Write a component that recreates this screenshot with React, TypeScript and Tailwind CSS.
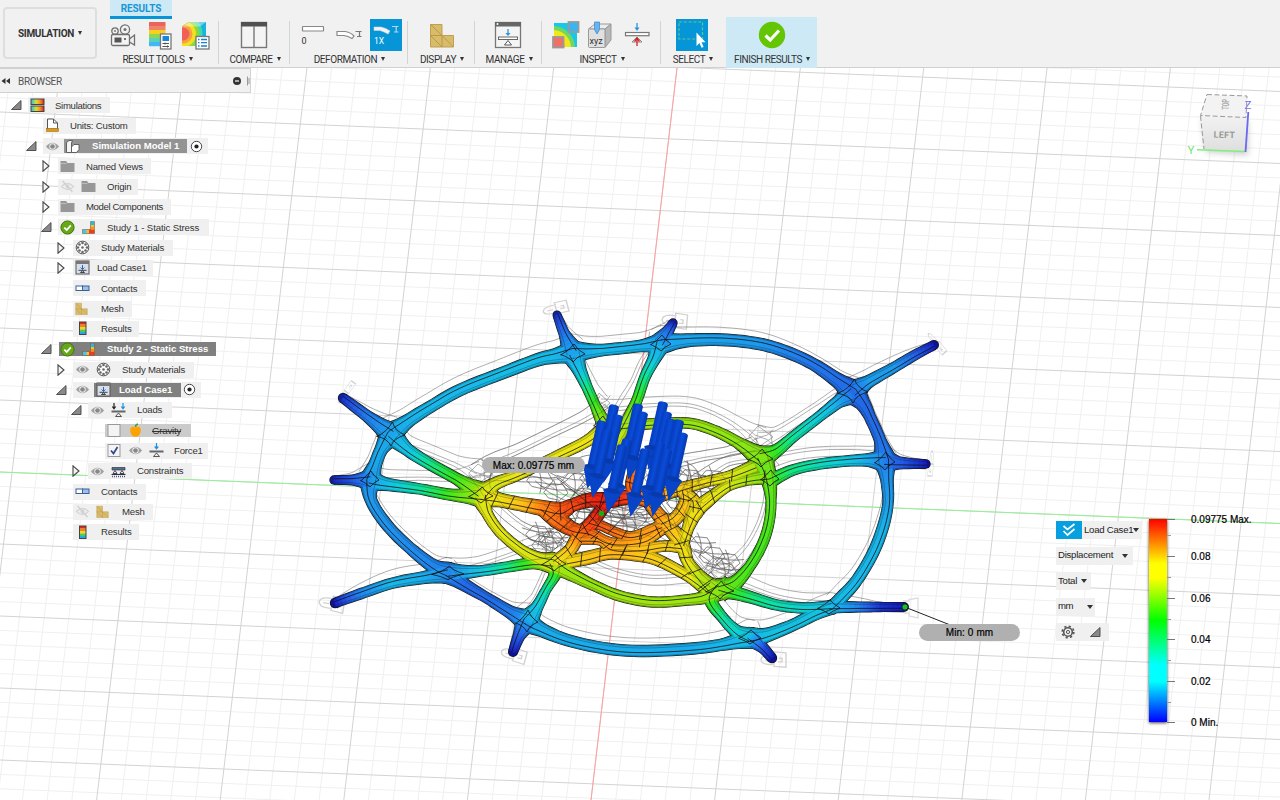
import React from 'react';

type P = [number, number, number, number];

const STOPS: [number, number, number, number][] = [
  [0, 18, 24, 190], [0.1, 36, 92, 230], [0.17, 32, 140, 238], [0.24, 24, 184, 234], [0.3, 16, 208, 214], [0.38, 16, 228, 150],
  [0.48, 50, 232, 32], [0.58, 150, 230, 18], [0.68, 236, 230, 20], [0.78, 255, 190, 24], [0.88, 255, 124, 20], [1, 244, 34, 18],
];

function heat(v: number, k = 1) {
  const t = Math.max(0, Math.min(1, v));
  let i = 0;
  while (i < STOPS.length - 2 && STOPS[i + 1][0] < t) i++;
  const a = STOPS[i];
  const b = STOPS[i + 1];
  const f = (t - a[0]) / (b[0] - a[0]);
  const c = [1, 2, 3].map((n) => Math.round((a[n] + (b[n] - a[n]) * f) * k));
  return `rgb(${c[0]},${c[1]},${c[2]})`;
}

const TUBES: P[][] = [
  // outer ring
  [[573, 352, 9, 0.21], [555, 356, 7, 0.24], [537, 360, 6, 0.25], [500, 374, 5.7, 0.25], [460, 390, 5.7, 0.24], [430, 407, 5.7, 0.24], [408, 421, 6.5, 0.23], [391, 434, 9, 0.21]],
  [[391, 434, 9, 0.21], [381, 450, 6, 0.22], [375, 465, 6, 0.21], [370, 480, 8, 0.18]],
  [[370, 480, 8, 0.18], [371, 500, 5.5, 0.19], [387, 525, 5.5, 0.18], [410, 548, 5.5, 0.17], [433, 566, 6.5, 0.16], [448, 573, 8, 0.15]],
  [[448, 573, 8, 0.15], [465, 585, 6, 0.12], [487, 598, 5, 0.12], [510, 612, 6, 0.15], [527, 621, 9, 0.21]],
  [[527, 621, 9, 0.21], [540, 629, 6.5, 0.22], [567, 640, 5.5, 0.22], [603, 648, 5.5, 0.22], [640, 651, 5.5, 0.22], [687, 649, 5.5, 0.22], [720, 645, 5.5, 0.24], [750, 638, 8, 0.24]],
  [[750, 638, 8, 0.24], [767, 635, 6.5, 0.26], [793, 625, 5.5, 0.26], [815, 614, 6, 0.26], [832, 607, 7, 0.23]],
  [[832, 607, 6, 0.23], [842, 597, 6, 0.25], [857, 580, 5.5, 0.24], [873, 553, 5.5, 0.24], [883, 527, 5.5, 0.23], [888, 503, 5, 0.2], [887, 480, 6, 0.18], [885, 460, 9, 0.15]],
  [[885, 460, 9, 0.15], [880, 440, 5.5, 0.13], [870, 417, 5.5, 0.12], [863, 404, 7, 0.12], [853, 392, 10, 0.12]],
  [[853, 392, 10, 0.12], [837, 380, 7, 0.13], [813, 364, 5.7, 0.14], [787, 352, 5.7, 0.16], [760, 344, 5.7, 0.19], [727, 340, 5.7, 0.2], [693, 340, 6, 0.21], [662, 343, 8, 0.21]],
  [[662, 343, 8, 0.2], [640, 346, 5.5, 0.23], [603, 350, 5.5, 0.24], [573, 352, 9, 0.2]],
  // legs
  [[573, 352, 9, 0.21], [564, 333, 5, 0.13], [557, 315, 3.8, 0.03]],
  [[391, 434, 9, 0.21], [367, 416, 5.5, 0.14], [343, 398, 4.5, 0.03]],
  [[370, 480, 8, 0.18], [352, 480, 4.5, 0.09], [334, 480, 4, 0.02]],
  [[448, 573, 8, 0.16], [427, 577, 6, 0.22], [393, 583, 5, 0.24], [360, 594, 5, 0.15], [335, 603, 4.5, 0.0]],
  [[527, 621, 9, 0.2], [519, 636, 5.5, 0.1], [513, 652, 4.3, 0.0]],
  [[750, 636, 8, 0.24], [763, 648, 5, 0.08], [772, 658, 4.5, 0.0]],
  [[830, 607, 6, 0.25], [860, 607, 4.8, 0.14], [880, 607, 4.5, 0.04], [904, 607, 4.2, 0.0]],
  [[885, 461, 9, 0.15], [900, 463, 5.5, 0.1], [926, 464, 4, 0.0]],
  [[853, 392, 10, 0.12], [868, 382, 6, 0.2], [893, 368, 5, 0.19], [915, 355, 4.8, 0.1], [934, 345, 4.3, 0.0]],
  [[660, 343, 8, 0.2], [668, 331, 5, 0.12], [673, 323, 4, 0.02]],
  // spokes
  [[573, 354, 9, 0.21], [579, 369, 6.5, 0.26], [587, 387, 5, 0.4], [595, 405, 4.8, 0.5], [603, 422, 7, 0.6]],
  [[660, 343, 8, 0.21], [655, 357, 6, 0.26], [645, 377, 5, 0.39], [637, 400, 5, 0.5], [627, 422, 6, 0.6], [612, 450, 5, 0.68]],
  [[391, 434, 9, 0.21], [408, 450, 6, 0.27], [430, 464, 5.5, 0.4], [457, 479, 5.5, 0.5], [480, 493, 9, 0.62]],
  [[370, 480, 8, 0.18], [385, 484, 6, 0.25], [420, 489, 5, 0.38], [453, 495, 5.5, 0.52], [482, 496, 9, 0.62]],
  [[448, 573, 8, 0.16], [480, 571, 5, 0.28], [507, 567, 5, 0.4], [533, 563, 5.5, 0.54], [553, 563, 8, 0.6]],
  [[553, 563, 8, 0.6], [555, 574, 5, 0.48], [546, 590, 4.5, 0.36], [537, 607, 5.5, 0.27], [527, 621, 9, 0.21]],
  [[720, 587, 9, 0.55], [711, 600, 6, 0.5], [723, 618, 5, 0.36], [737, 632, 6, 0.3], [750, 638, 8, 0.24]],
  [[720, 587, 9, 0.53], [733, 592, 6.5, 0.48], [753, 598, 5.5, 0.4], [777, 605, 5, 0.35], [803, 608, 5, 0.3], [830, 607, 6, 0.24]],
  [[853, 392, 10, 0.12], [838, 402, 6, 0.22], [820, 416, 5, 0.29], [793, 437, 5, 0.38], [776, 451, 6, 0.48], [761, 457, 9, 0.56]],
  [[885, 461, 9, 0.15], [868, 460, 6, 0.22], [847, 461, 5, 0.28], [820, 464, 5, 0.34], [793, 470, 5, 0.4], [770, 481, 7, 0.52]],
  // inner ring
  [[603, 428, 6, 0.62], [623, 427, 5.5, 0.6], [647, 424, 5, 0.59], [687, 423, 5, 0.58], [713, 430, 5, 0.58], [737, 442, 5.5, 0.57], [761, 458, 9, 0.56]],
  [[761, 457, 9, 0.56], [768, 476, 8, 0.53], [771, 500, 4.8, 0.52], [769, 523, 4.8, 0.51], [762, 545, 5, 0.5], [750, 566, 5, 0.5], [735, 583, 7, 0.52], [720, 590, 9, 0.56]],
  [[720, 589, 9, 0.56], [705, 597, 6, 0.58], [687, 600, 5, 0.59], [653, 602, 5, 0.59], [620, 596, 5, 0.59], [593, 585, 5, 0.58], [567, 572, 6.5, 0.59], [553, 563, 8, 0.62]],
  [[553, 563, 8, 0.64], [538, 559, 6.5, 0.66], [520, 549, 5, 0.66], [500, 532, 5, 0.67], [487, 513, 5, 0.67], [482, 496, 9, 0.64]],
  [[482, 496, 9, 0.64], [495, 484, 6, 0.66], [520, 474, 5, 0.68], [553, 458, 5, 0.68], [587, 441, 5.5, 0.68], [606, 426, 7, 0.64]],
  // hub
  [[482, 496, 9, 0.66], [500, 500, 6.5, 0.7], [520, 504, 6.5, 0.77], [542, 508, 7.5, 0.88], [560, 511, 9, 0.93], [573, 505, 6, 0.95], [590, 500, 7, 0.99], [610, 500, 7.5, 1], [632, 497, 6.5, 0.95], [650, 502, 6, 0.86]],
  [[542, 508, 7, 0.87], [557, 519, 9, 0.9], [572, 529, 7, 0.92], [590, 533, 5, 0.9], [612, 543, 5, 0.84], [643, 541, 5, 0.8], [661, 529, 6, 0.82]],
  [[606, 502, 7, 1], [599, 513, 6, 1], [590, 525, 7, 0.96], [579, 535, 6.5, 0.88], [570, 550, 6, 0.76], [555, 563, 7, 0.66]],
  [[590, 522, 5, 0.95], [602, 526, 4.5, 0.92], [618, 533, 4.5, 0.88], [634, 536, 4.5, 0.83], [661, 526, 6, 0.83]],
  [[567, 562, 6, 0.7], [587, 558, 6.5, 0.76], [610, 553, 6, 0.79], [640, 555, 6.5, 0.76], [660, 561, 5.5, 0.73], [688, 576, 5, 0.68], [708, 590, 7, 0.6]],
  [[580, 540, 4, 0.86], [600, 541, 4, 0.84], [614, 549, 5.5, 0.8], [642, 549, 5.5, 0.77], [665, 546, 5, 0.74], [682, 547, 6, 0.71]],
  [[634, 470, 5, 0.88], [632, 488, 6, 0.92], [645, 498, 6, 0.87], [657, 513, 6.5, 0.84], [670, 528, 7.5, 0.78], [682, 544, 7, 0.71], [688, 562, 5.5, 0.68], [700, 578, 7, 0.62], [712, 590, 8, 0.58]],
  [[655, 498, 6, 0.84], [668, 493, 6, 0.8], [684, 488, 6, 0.74], [705, 482, 5, 0.7], [730, 476, 5, 0.66], [755, 466, 7, 0.6]],
  [[684, 490, 5.5, 0.76], [685, 503, 6, 0.76], [676, 518, 6.5, 0.77], [662, 526, 6, 0.8]],
  [[682, 545, 6, 0.7], [688, 528, 5.5, 0.7], [695, 512, 8, 0.7], [708, 500, 6.5, 0.68], [728, 486, 5, 0.65], [748, 480, 5, 0.6], [768, 477, 7, 0.54]],
  [[684, 493, 5, 0.74], [694, 500, 5.5, 0.72], [695, 512, 6, 0.7]],
];

function sample(pts: P[], n: number): P[] {
  const out: P[] = [];
  for (let i = 0; i < pts.length - 1; i++) {
    const p0 = pts[Math.max(0, i - 1)];
    const p1 = pts[i];
    const p2 = pts[i + 1];
    const p3 = pts[Math.min(pts.length - 1, i + 2)];
    for (let s = 0; s < n; s++) {
      const t = s / n;
      out.push([0, 1, 2, 3].map((k) =>
        k > 1
          ? p1[k] + (p2[k] - p1[k]) * t
          : 0.5 * (2 * p1[k] + (p2[k] - p0[k]) * t + (2 * p0[k] - 5 * p1[k] + 4 * p2[k] - p3[k]) * t * t + (3 * p1[k] - p0[k] - 3 * p2[k] + p3[k]) * t * t * t),
      ) as P);
    }
  }
  out.push([...pts[pts.length - 1]] as P);
  // widen towards junctions so that neighbouring tubes meet in a fillet
  const ends = [pts[0], pts[pts.length - 1]].filter((e) => e[2] >= 8);
  return out.map((p) => {
    const extra = ends.reduce((m, e) => m + 2.6 * Math.exp(-(((p[0] - e[0]) ** 2 + (p[1] - e[1]) ** 2) / 130)), 0);
    return [p[0], p[1], p[2] + extra, p[3]] as P;
  });
}

function side(s: P[], k: number, extra = 0): [number, number][] {
  return s.map((p, i) => {
    const a = s[Math.max(0, i - 1)];
    const b = s[Math.min(s.length - 1, i + 1)];
    const l = Math.hypot(b[0] - a[0], b[1] - a[1]) || 1;
    const w = p[2] * k + extra;
    return [p[0] - ((b[1] - a[1]) / l) * w, p[1] + ((b[0] - a[0]) / l) * w];
  });
}

const line = (q: [number, number][]) => 'M' + q.map((p) => p[0].toFixed(1) + ' ' + p[1].toFixed(1)).join('L');

const SAMPLED = TUBES.map((t) => sample(t, 6));
const REST = TUBES.map((t) => sample(t.map((p) => [p[0] - 3 * p[3], p[1] - 39 * (p[3] - 0.03), p[2], p[3]] as P), 6));

function Strip({ s, k, shade }: { s: P[]; k: number; shade: number }) {
  const a = side(s, k);
  const b = side(s, -k);
  return (
    <>
      {s.slice(0, -1).map((p, i) => {
        const c = heat(p[3], shade);
        return <path key={i} d={line([a[i], a[i + 1], b[i + 1], b[i]]) + 'Z'} fill={c} stroke={c} strokeWidth="0.7" />;
      })}
    </>
  );
}

function Rungs({ s, step }: { s: P[]; step: number }) {
  const a = side(s, 1);
  const b = side(s, -1);
  const d: string[] = [];
  for (let i = 4; i < s.length - 2; i += step) d.push(line([a[i], b[i + 1]]));
  return <path d={d.join('')} />;
}

const NODES: [number, number, number, number][] = [
  [573, 353, 12, 9], [391, 434, 14, 12], [370, 479, 9, 8], [448, 573, 16, 7], [527, 621, 11, 11], [750, 637, 11, 7],
  [853, 391, 15, 12], [885, 461, 10, 9], [661, 343, 10, 8], [481, 495, 12, 8], [554, 563, 12, 8], [720, 590, 14, 9],
  [761, 458, 12, 9], [770, 478, 9, 8], [829, 607, 11, 7], [602, 424, 8, 8],
];

const INNER_NODES = NODES.filter(([x, y]) => y > 423 && y < 600 && x > 470 && x < 780);

// polygonal cells of the unloaded hub, showing through its openings
const WEB: [number, number, number][] = [
  [540, 480, 13], [556, 492, 12], [574, 482, 13], [592, 478, 12], [538, 534, 12], [552, 540, 12], [566, 520, 10], [610, 518, 12],
  [622, 512, 11], [634, 520, 12], [646, 512, 10], [626, 526, 11], [598, 514, 9], [700, 494, 13], [690, 478, 12], [712, 480, 14],
  [676, 503, 9], [700, 545, 12], [712, 556, 13], [728, 562, 12], [724, 572, 13], [545, 545, 13], [640, 470, 12], [584, 496, 11], [584, 514, 8],
];

const cell = (x: number, y: number, r: number) =>
  `M${x - r} ${y}L${x - r * 0.4} ${y - r * 0.7}L${x + r * 0.6} ${y - r * 0.6}L${x + r} ${y + r * 0.1}L${x + r * 0.3} ${y + r * 0.7}L${x - r * 0.6} ${y + r * 0.5}ZM${x - r * 1.3} ${y - r * 0.5}Q${x} ${y} ${x + r * 1.3} ${y - r * 0.2}M${x - r * 0.2} ${y - r}Q${x + r * 0.3} ${y} ${x} ${y + r}`;

function Model() {
  return (
    <g strokeLinejoin="round" strokeLinecap="round">
      <g fill="none" stroke="#555" strokeWidth="0.6" opacity="0.8">
        {REST.map((s, i) => (
          <g key={i}>
            <path d={line(side(s, 1))} />
            <path d={line(side(s, -1))} />
            {s[3][3] + s[s.length - 3][3] > 0.5 && <path d={line(side(s, 0.35))} />}
          </g>
        ))}
        {INNER_NODES.map(([x, y, a, b], i) => (
          <path key={i} d={`M${x - a} ${y - 22}L${x - 3} ${y - 23 - b}L${x + a} ${y - 21}L${x - 1} ${y - 21 + b}ZM${x - a} ${y - 28}Q${x} ${y - 14} ${x + a} ${y - 28}M${x - a} ${y - 14}Q${x} ${y - 28} ${x + a} ${y - 13}`} />
        ))}
        {WEB.map(([x, y, r], i) => <path key={i} d={cell(x, y, r)} />)}
      </g>
      <g fill="#151515">
        {SAMPLED.map((s, i) => (
          <g key={i}>
            <path d={line([...side(s, 1, 0.7), ...side(s, -1, -0.7).reverse()]) + 'Z'} />
            <circle cx={s[s.length - 1][0]} cy={s[s.length - 1][1]} r={TUBES[i][TUBES[i].length - 1][2] + 0.7} />
          </g>
        ))}
      </g>
      {SAMPLED.map((s, i) => (
        <g key={i}>
          <Strip s={s} k={0.95} shade={0.76} />
          <circle cx={s[s.length - 1][0]} cy={s[s.length - 1][1]} r={TUBES[i][TUBES[i].length - 1][2]} fill={heat(s[s.length - 1][3], 0.76)} />
        </g>
      ))}
      {SAMPLED.map((s, i) => (
        <g key={i}>
          <Strip s={s} k={0.72} shade={1} />
        </g>
      ))}
      <g fill="none" stroke="#101010" strokeWidth="0.8">
        {SAMPLED.map((s, i) => (
          <g key={i}>
            <path d={line(side(s, 0.3))} />
            <path d={line(side(s, -0.55))} opacity="0.35" />
            {s[0][3] > 0.65 && <Rungs s={s} step={5} />}
          </g>
        ))}
        {NODES.map(([x, y, a, b], i) => (
          <path key={i} d={`M${x - a} ${y + b * 0.2}Q${x - 4} ${y - 2} ${x + a * 0.1} ${y - b}Q${x + 4} ${y - 3} ${x + a} ${y + 1}Q${x + 3} ${y + 4} ${x} ${y + b}Q${x - 4} ${y + 4} ${x - a} ${y + b * 0.2}Z`} />
        ))}
      </g>
      <g fill="none" stroke="#222" strokeWidth="0.5" opacity="0.45">
        {REST.filter((s) => s[0][3] > 0.62).map((s, i) => (
          <g key={i}>
            <path d={line(side(s, 1))} />
            <path d={line(side(s, -1))} />
          </g>
        ))}
        {WEB.map(([x, y, r], i) => <path key={i} d={cell(x, y, r)} />)}
      </g>
    </g>
  );
}

const ARROWS: [number, number][] = [
  [638, 406], [614, 407], [643, 414], [618, 417], [663, 404], [667, 414], [671, 421], [679, 422], [602, 423],
  [607, 432], [683, 435], [627, 441], [622, 447], [660, 444], [667, 451], [645, 451],
];

function Forces() {
  return (
    <g>
      <defs>
        <linearGradient id="shaft" x1="0" x2="1" y1="0" y2="0">
          <stop offset="0" stopColor="#063cb8" />
          <stop offset="0.5" stopColor="#0a4cdb" />
          <stop offset="1" stopColor="#0538ac" />
        </linearGradient>
      </defs>
      {ARROWS.map(([x, y], i) => (
        <g key={i} transform={`translate(${x} ${y}) rotate(12.5)`}>
          <path d="M-5 0A5 2.4 0 0 1 5 0V46H-5Z" fill="url(#shaft)" />
          <path d="M-9 45Q0 40 9 45L0 67Z" fill="#083aae" />
          <path d="M-9 45Q0 50 9 45L0 67Z" fill="#0844c8" />
        </g>
      ))}
    </g>
  );
}

const RANGE = Array.from({ length: 120 }, (_, i) => i - 60);
const ANCHORS: [number, number, number, number][] = [
  [555, 309, -15, 0.7], [346, 393, -55, 0.35], [331, 604, 10, 0.9], [513, 655, 15, 0.8], [773, 660, 0, 0.9], [674, 321, 5, 0.9], [936, 343, 50, 0.4], [931, 463, 95, 0.3],
];

function Scene() {
  return (
    <svg className="absolute inset-0 h-full w-full" viewBox="0 68 1280 732" preserveAspectRatio="none">
      <rect y="68" width="1280" height="732" fill="#fff" />
      {[false, true].map((major) => (
        <g key={String(major)} stroke={major ? '#d3d3d3' : '#f0f0f0'} strokeWidth="1">
          {RANGE.filter((n) => (n % 5 === 0) === major).map((n) => (
            <g key={n}>
              <line x1={677 + n * 24.67} y1="68" x2={591 + n * 24.72} y2="800" />
              <line x1="0" y1={472 + n * 14.4} x2="1280" y2={523.5 + n * 14.4} />
            </g>
          ))}
        </g>
      ))}
      <line x1="677" y1="68" x2="591" y2="800" stroke="#ffa0a0" />
      <line x1="0" y1="472" x2="1280" y2="523.5" stroke="#94f294" />
      <g fill="none" stroke="#d2d2d2" strokeWidth="1.4">
        {ANCHORS.map(([x, y, r, k], i) => (
          <g key={i} transform={`translate(${x} ${y}) rotate(${r}) scale(1 ${k})`}>
            <path d="M2 -6H-5Q-12 -5 -12 0Q-11 5 -4 5H0M1 -9L13 -8V8L1 7ZM-8 0H-2M6 -2H9V2H5" />
          </g>
        ))}
      </g>
      <Model />
      <line x1="601" y1="513" x2="557" y2="478" stroke="#222" strokeWidth="0.7" />
      <Forces />
      <circle cx="601.5" cy="513.5" r="2.7" fill="#10b010" />
      <path d="M903 601H909V599.500L918 598V618L909 616V613H904" fill="none" stroke="#ddd" strokeWidth="1.3" />
      <path d="M906 607.500L949 624.500" stroke="#222" strokeWidth="1" />
      <circle cx="905" cy="607" r="3.200" fill="#18c018" stroke="#114" strokeWidth="1" />
      <Cube />
    </svg>
  );
}

function Cube() {
  return (
    <g>
      <defs>
        <filter id="soft" x="-30%" y="-30%" width="160%" height="160%"><feGaussianBlur stdDeviation="3" /></filter>
        <linearGradient id="face" x1="0" y1="0" x2="0" y2="1"><stop offset="0" stopColor="#f2f2f2" /><stop offset="1" stopColor="#dedede" /></linearGradient>
      </defs>
      <path d="M1202 119L1248 122V155L1206 152Z" fill="#999" opacity="0.5" filter="url(#soft)" />
      <path d="M1207 95L1247 96L1246 118L1200 116Z" fill="#f3f3f3" />
      <path d="M1200 116L1248 118L1245 152L1204 149Z" fill="url(#face)" />
      <path d="M1207 94.500L1247 96L1246 117.500L1200.500 115.500ZM1200.500 116L1204 149" fill="none" stroke="#999" strokeWidth="1" strokeDasharray="5 2.500" />
      <path d="M1197 149.800L1245 151.500" stroke="#7df07d" strokeWidth="1.600" />
      <path d="M1245.500 152L1248.300 112" stroke="#6a6af0" strokeWidth="1.800" />
      <g fontFamily="Roboto, sans-serif">
        <text x="1213.500" y="137.500" fontSize="9" fontWeight="bold" fill="#999" letterSpacing="0.300" transform="rotate(2 1213 138)">LEFT</text>
        <text x="0" y="0" textAnchor="middle" fontSize="10" fontWeight="bold" fill="#aaa" transform="translate(1229 104.500) rotate(-88) scale(0.550 1)">TOP</text>
        <text x="1187.500" y="154" fontSize="11.500" fill="#6be86b">Y</text>
        <text x="1244.500" y="109" fontSize="11.500" fill="#7272f5">Z</text>
      </g>
    </g>
  );
}

/* ---------- toolbar ---------- */

const Caret = () => <span className="ml-[4px] inline-block h-0 w-0 shrink-0 border-x-[3px] border-t-[4px] border-x-transparent border-t-[#333]" />;
const BigCaret = () => <span className="ml-[4px] inline-block h-0 w-0 shrink-0 border-x-[2.500px] border-t-[4px] border-x-transparent border-t-[#333]" />;

function Group({ w, icons, label, line: rule = true }: { w: string; icons: React.ReactNode; label: string; line?: boolean }) {
  return (
    <div className={`relative flex flex-col items-center pt-[17px] ${w}`}>
      <div className="flex h-[36px] items-center justify-center gap-[4px]">{icons}</div>
      <div className="-mt-px flex h-[14px] items-center whitespace-nowrap pl-px font-['Roboto',sans-serif] text-[10px] tracking-[-0.420px] text-[#333]">
        {label}
        <BigCaret />
      </div>
      {rule && <span className="absolute right-0 top-[21px] h-[43px] w-px bg-[#d4d4d4]" />}
    </div>
  );
}

const Svg = ({ w = 32, h = 32, children }: { w?: number; h?: number; children: React.ReactNode }) => (
  <svg width={w} height={h} viewBox={`0 0 ${w} ${h}`} fill="none" className="shrink-0">{children}</svg>
);

const Camera = () => (
  <Svg w={28} h={28}>
    <g stroke="#707070" strokeWidth="1.300">
      <circle cx="5" cy="9" r="3.200" /><circle cx="15" cy="7.500" r="4.600" />
      <rect x="1.500" y="12.500" width="18" height="11" rx="1.500" fill="#f4f4f4" />
      <path d="M19.500 17L24.500 13V23L19.500 20" />
    </g>
    <circle cx="15" cy="7.500" r="1.500" fill="#707070" /><circle cx="5" cy="9" r="0.900" fill="#707070" />
    <rect x="4.500" y="15.500" width="7" height="5" fill="#555" /><circle cx="15" cy="17" r="1.100" fill="#555" />
  </Svg>
);

const Legend = () => (
  <Svg w={30} h={30}>
    {['#e8645c', '#ee8468', '#f6d020', '#8ed850', '#5cd0b8', '#40b8f6'].map((c, i) => <rect key={c} x="3" y={1 + i * 4} width="16.500" height="4.200" fill={c} />)}
    <rect x="14.500" y="13" width="10.500" height="15" fill="#fff" stroke="#777" strokeWidth="1.300" />
    <rect x="16.500" y="15" width="6.500" height="5" fill="#1486dc" />
    <path d="M16.500 22.500H23M16.500 25.500H23M19 21.500V23.500M21.500 24.500V26.500" stroke="#555" />
  </Svg>
);

const Contour = () => (
  <Svg w={30} h={30}>
    <defs><clipPath id="cc"><path d="M2 5.500L9 1H26V25H2Z" /></clipPath></defs>
    <g clipPath="url(#cc)">
      <rect width="30" height="30" fill="#19b4dc" />
      <circle cx="3" cy="13" r="19.500" fill="#3fd8b0" /><circle cx="3" cy="13" r="16.500" fill="#88da3c" />
      <circle cx="3" cy="13" r="13" fill="#f4e020" /><circle cx="3" cy="13" r="9.500" fill="#f8a040" /><circle cx="3" cy="13" r="6.500" fill="#ee6058" />
      <path d="M2 5.500L9 1H26L20 5.500Z" fill="#fff" opacity="0.400" />
    </g>
    <rect x="16" y="15.500" width="13" height="12.500" fill="#fff" stroke="#777" strokeWidth="1.300" />
    <path d="M18 18.500H19.500M21 18.500H27M18 21.700H19.500M21 21.700H27M18 25H19.500M21 25H27" stroke="#1880d0" strokeWidth="1.300" />
  </Svg>
);

const Compare = () => (
  <Svg w={28} h={28}>
    <rect x="1.500" y="1.500" width="25" height="25" fill="#f4f4f4" stroke="#777" strokeWidth="1.400" />
    <rect x="1" y="1" width="26" height="4.500" fill="#505050" /><path d="M14 5V26" stroke="#777" strokeWidth="1.400" />
  </Svg>
);

const Def0 = () => (
  <Svg w={32} h={30}>
    <rect x="5.500" y="6.500" width="21" height="4.500" rx="0.500" fill="#fff" stroke="#888" strokeWidth="1.200" />
    <text x="4.500" y="23.500" fontSize="9" fontFamily="Roboto, sans-serif" fill="#333">0</text>
  </Svg>
);

const DefA = () => (
  <Svg w={32} h={30}>
    <path d="M4 11.500H12Q17 12 21 16L19 18.500Q15 16 11 15.500H4Z" fill="#fff" stroke="#888" strokeWidth="1.200" />
    <path d="M22.500 11.500H28.500M24 16.500H28.500M26.500 11.500V16.500" stroke="#777" strokeWidth="1.200" />
  </Svg>
);

const Def1 = () => (
  <div className="h-[32px] w-[32px] bg-[#0696d7]">
    <Svg>
      <path d="M4 8H11Q16 9 20 12L18 15Q14 12.500 10 11.500H4Z" fill="#f2f2f2" stroke="#d8d8d8" strokeWidth="0.500" />
      <path d="M22 7.500H28.500M24 13H28.500M26.200 7.500V13" stroke="#a8daf2" strokeWidth="1.200" />
      <text x="4" y="24.500" fontSize="8.500" fontFamily="Roboto, sans-serif" fill="#fff">1X</text>
    </Svg>
  </div>
);

const Mesh = ({ s = 26 }: { s?: number }) => (
  <svg width={s} height={s} viewBox="0 0 26 26" className="shrink-0">
    <path d="M1.500 2.500H13V13.500H24.500V25H1.500Z" fill="#d9bc6a" stroke="#bf9f50" />
    <path d="M1.500 13.500H13V25M1.500 2.500L13 13.500L24.500 25M1.500 13.500L13 25" fill="none" stroke="#b8984a" strokeWidth="1" />
  </svg>
);

const Manage = () => (
  <Svg w={28} h={28}>
    <rect x="1.500" y="1.500" width="25" height="25" fill="#f4f4f4" stroke="#777" strokeWidth="1.300" />
    <rect x="1" y="1" width="26" height="4.500" fill="#666" /><circle cx="3.500" cy="3" r="1" fill="#fff" />
    <path d="M14 8V13" stroke="#2795dd" strokeWidth="1.300" /><path d="M11.500 12H16.500L14 15Z" fill="#2795dd" />
    <rect x="4.500" y="16" width="19" height="2.500" fill="#fff" stroke="#666" />
    <path d="M14 19.500L17.500 24H10.500Z" fill="#fff" stroke="#555" />
  </Svg>
);

const InspectA = () => (
  <Svg w={30} h={30}>
    <defs><clipPath id="ia"><rect x="3" y="3" width="23" height="24" /></clipPath></defs>
    <g clipPath="url(#ia)">
      <rect width="30" height="30" fill="#18c8e8" /><circle cx="2" cy="28" r="22" fill="#70d860" />
      <circle cx="2" cy="28" r="18" fill="#f0e818" /><circle cx="2" cy="28" r="12" fill="#f8a030" />
    </g>
    <rect x="17.500" y="2" width="10" height="10" fill="#38b6f4" stroke="#999" strokeWidth="1.800" />
    <rect x="2" y="17" width="10.500" height="10.500" fill="#f07068" stroke="#999" strokeWidth="1.800" />
  </Svg>
);

const InspectB = () => (
  <Svg w={30} h={30}>
    <path d="M3.500 9L10 4H26L20 9Z" fill="#ececec" stroke="#999" /><path d="M20 9L26 4V20L20 27.500Z" fill="#b8b8b8" stroke="#999" />
    <rect x="3.500" y="9" width="16.500" height="18.500" rx="1" fill="#e0e0e0" stroke="#999" />
    <path d="M9.500 2H14.500V9.500L12 14L9.500 9.500Z" fill="#67b4ee" stroke="#3487cc" strokeWidth="0.700" />
    <text x="4.500" y="23.500" fontSize="9" fontFamily="Roboto, sans-serif" fill="#333">xyz</text>
  </Svg>
);

const InspectC = () => (
  <Svg w={30} h={30}>
    <path d="M15 3V8" stroke="#2795dd" strokeWidth="1.300" /><path d="M12.500 7.500H17.500L15 11Z" fill="#2795dd" />
    <rect x="3.500" y="12.500" width="23.500" height="3.200" fill="#fff" stroke="#777" strokeWidth="1.200" />
    <path d="M15 17L20 22H10Z" fill="#fff" stroke="#888" /><path d="M15 26V19M12.500 21.500L15 18L17.500 21.500" stroke="#d82020" strokeWidth="1.300" />
  </Svg>
);

const Select = () => (
  <div className="h-[32px] w-[32px] bg-[#0696d7]">
    <Svg>
      <rect x="3" y="3" width="23.500" height="17" stroke="#54c890" strokeWidth="1.200" strokeDasharray="3 1.800" />
      <path d="M20.500 13.500V27L23.500 24L25.500 28.800L27.600 27.900L25.600 23.300H29.500Z" fill="#fff" />
    </Svg>
  </div>
);

const Check = () => (
  <Svg w={28} h={28}><circle cx="14" cy="14" r="13.200" fill="#63c504" /><path d="M7.500 14.500L12.200 19L21 9.500" stroke="#fff" strokeWidth="3.200" /></Svg>
);

/* ---------- browser tree ---------- */

const I = ({ children }: { children: React.ReactNode }) => (
  <svg width="15" height="15" viewBox="0 0 15 15" fill="none" className="shrink-0">{children}</svg>
);
const Slot = ({ children }: { children: React.ReactNode }) => <span className="flex w-[21px] shrink-0 pl-[2px]">{children}</span>;

const Eye = () => <I><path d="M1 7.500Q7.500 0 14 7.500Q7.500 15 1 7.500Z" fill="#a0a0a0" /><circle cx="7.500" cy="7.500" r="3.200" fill="#eee" /><circle cx="7.500" cy="7.500" r="2.300" fill="#888" /></I>;
const EyeOff = () => <I><path d="M1.500 7.500Q7.500 1.500 13.500 7.500Q7.500 13.500 1.500 7.500Z" stroke="#d6d6d6" strokeWidth="1.300" /><circle cx="7.500" cy="7.500" r="2" fill="#d6d6d6" /><path d="M2.500 2L12.500 13" stroke="#cfcfcf" strokeWidth="1.300" /></I>;
const Folder = () => <I><path d="M0.500 2H6L7.500 4H14.500V13H0.500Z" fill="#979797" /><path d="M0.500 4.500H6.500" stroke="#ccc" strokeWidth="0.700" /></I>;
const Ok = () => <I><circle cx="7.500" cy="7.500" r="6.600" fill="#66a818" stroke="#47760e" strokeWidth="1" /><path d="M4.300 7.700L6.700 10L10.800 5.300" stroke="#fff" strokeWidth="1.800" /></I>;
const Study = () => (
  <I>
    <path d="M9.500 1.500H13.500V13.500H1.500V9.500H9.500Z" fill="#f5c030" stroke="#444" strokeWidth="0.500" />
    <rect x="10" y="1.500" width="3" height="3.500" fill="#28b8f0" /><rect x="2" y="9.800" width="3.500" height="3.400" fill="#3cc8f0" />
    <path d="M8 9.500H13.300V13.300H8Z" fill="#ee3a20" /><path d="M10 7H13.300V9.500H10Z" fill="#f89020" />
  </I>
);
const Sims = () => <I>{[1, 8].map((y) => <g key={y}><rect x="1" y={y} width="13" height="5.500" fill="url(#rain)" stroke="#444" /></g>)}<defs><linearGradient id="rain"><stop offset="0" stopColor="#28b8f0" /><stop offset="0.400" stopColor="#d8e030" /><stop offset="0.700" stopColor="#f89020" /><stop offset="1" stopColor="#e02020" /></linearGradient></defs></I>;
const Units = () => <I><path d="M2.500 1H8.500L12.500 5V11H2.500Z" fill="#fff" stroke="#555" /><path d="M8.500 1V5H12.500" stroke="#555" /><rect x="1.500" y="10.500" width="12" height="3" fill="#d89a20" stroke="#a87010" strokeWidth="0.600" /></I>;
const Body = () => <I><path d="M1.500 3.500L4 1.500H7.500L6.500 4V13.500H1.500Z" fill="#f4f4f4" stroke="#555" strokeWidth="0.900" /><path d="M6.500 8L9 5.500H14V10.500L11.500 13.500H6.500Z" fill="#fff" stroke="#555" strokeWidth="0.900" /></I>;
const Material = () => (
  <I>
    <circle cx="7.500" cy="7.500" r="6.300" fill="#fff" stroke="#555" strokeWidth="1" />
    {[[7.5, 3], [7.5, 12], [3, 7.5], [12, 7.5], [7.5, 7.5], [4.5, 4.5], [10.5, 10.5], [10.5, 4.5], [4.5, 10.5]].map(([x, y]) => <circle key={`${x}-${y}`} cx={x} cy={y} r="1.300" fill="#666" />)}
  </I>
);
const LoadCase = () => <I><rect x="1" y="1" width="13" height="13" fill="#d8dfe8" stroke="#555" /><rect x="1" y="1" width="13" height="3" fill="#777" /><path d="M7.500 5V9M5.700 7.500L7.500 9.500L9.300 7.500" stroke="#2468c0" /><path d="M3.500 10.300H11.500M5.500 12.500L7.500 10.800L9.500 12.500Z" stroke="#333" strokeWidth="0.900" /></I>;
const Contact = () => <I><rect x="1" y="5" width="6.500" height="4.500" fill="#fff" stroke="#3a5f9a" /><rect x="7.500" y="5" width="6.500" height="4.500" fill="#9cc0ea" stroke="#3a5f9a" /></I>;
const Res = () => <I>{['#e02818', '#f08020', '#f0d820', '#50c860', '#28a8e8'].map((c, i) => <rect key={c} x="4.500" y={1 + i * 2.5} width="6.500" height="2.600" fill={c} />)}<rect x="4.500" y="1" width="6.500" height="12.500" stroke="#444" /></I>;
const Force = ({ two = false }: { two?: boolean }) => (
  <I>
    {two ? <><path d="M3 0V5M1.300 3.500L3 5.700L4.700 3.500" stroke="#222" strokeWidth="1.200" /><path d="M12 0V5M10.300 3.500L12 5.700L13.700 3.500" stroke="#1f8fe0" strokeWidth="1.200" /></> : <path d="M7.500 0V5M5.700 3.500L7.500 5.700L9.300 3.500" stroke="#1f8fe0" strokeWidth="1.200" />}
    <rect x="0.500" y="7.500" width="14" height="2" fill="#666" /><path d="M7.500 10L10.500 13.500H4.500Z" fill="#eee" stroke="#444" strokeWidth="0.900" />
  </I>
);
const Fix = () => <I><path d="M1 3.500H14V6H1Z" fill="#4f7390" stroke="#334" strokeWidth="0.700" /><path d="M4 6.500L6 9.500H2ZM11 6.500L13 9.500H9Z" fill="#fff" stroke="#334" strokeWidth="0.900" /><path d="M0.500 10.500H14.500" stroke="#334" strokeWidth="1" /><path d="M1 12.500H14" stroke="#557" strokeWidth="1.500" strokeDasharray="1 1" /></I>;
const Apple = () => <I><path d="M7.500 4.500C4 2.500 1.500 5 2.300 8.500C3 12 5 14.500 7.500 13.500C10 14.500 12 12 12.700 8.500C13.500 5 11 2.500 7.500 4.500Z" fill="#ffa200" /><path d="M7.500 4Q7.500 1.500 10 1" stroke="#44a030" strokeWidth="1.500" /></I>;
const Box = ({ on = false }: { on?: boolean }) => <I><rect x="1" y="1.500" width="12" height="12" fill="#f4f4f4" stroke="#999" />{on && <path d="M4 7.500L6.500 10.500L10.500 4" stroke="#2a4890" strokeWidth="1.700" />}</I>;
const Radio = () => <I><circle cx="7.500" cy="7.500" r="5.200" fill="#fff" stroke="#444" /><circle cx="7.500" cy="7.500" r="2.100" fill="#222" /></I>;

function Row({ pad, w, arrow, bg = 'bg-[#f0f0f0]', children }: { pad: string; w: string; arrow?: 'open' | 'closed'; bg?: string; children: React.ReactNode }) {
  return (
    <div className={`flex h-[20.330px] items-center ${pad}`}>
      <span className="w-[18px] shrink-0">
        {arrow && (
          <svg width="12" height="12" viewBox="0 0 12 12" fill="none">
            {arrow === 'open' ? <path d="M11 1.500V10.500H1.500Z" fill="#8a8a8a" stroke="#444" strokeWidth="0.900" /> : <path d="M3 0.800L9 6L3 11.200Z" fill="#f4f4f4" stroke="#444" strokeWidth="1.100" />}
          </svg>
        )}
      </span>
      <div className={`flex items-center whitespace-nowrap ${bg} ${w}`}>{children}</div>
    </div>
  );
}

const T = ({ children, c = 'ml-[7px]' }: { children: React.ReactNode; c?: string }) => <span className={c}>{children}</span>;

function Tree() {
  return (
    <div className="mt-[2.200px] text-[9.600px] leading-none tracking-[-0.200px] text-[#333]">
      <Row pad="pl-[10px]" w="h-[16px] w-[82px]" arrow="open"><Slot><Sims /></Slot><T c="ml-[6px] tracking-[-0.300px]">Simulations</T></Row>
      <Row pad="pl-[25px]" w="h-[16px] w-[93px]"><Slot><Units /></Slot><T c="ml-[6px]">Units: Custom</T></Row>
      <Row pad="pl-[25px]" w="h-[16px] w-[165px]" arrow="open">
        <Slot><Eye /></Slot>
        <span className="flex h-[14px] w-[123px] items-center bg-[#939393] font-bold tracking-[0px] text-white"><span className="pl-px"><Body /></span><T c="ml-[12px]">Simulation Model 1</T></span>
        <span className="ml-[2px]"><Radio /></span>
      </Row>
      <Row pad="pl-[40px]" w="h-[16px] w-[93px]" arrow="closed"><Slot><Folder /></Slot><T>Named Views</T></Row>
      <Row pad="pl-[40px]" w="h-[16px] w-[80px]" arrow="closed"><Slot><EyeOff /></Slot><Slot><Folder /></Slot><T>Origin</T></Row>
      <Row pad="pl-[40px]" w="h-[16px] w-[113px]" arrow="closed"><Slot><Folder /></Slot><T c="ml-[7px] tracking-[-0.400px]">Model Components</T></Row>
      <Row pad="pl-[40px]" w="h-[16px] w-[151px]" arrow="open"><Slot><Ok /></Slot><Slot><Study /></Slot><T c="ml-[7px] tracking-[-0.120px]">Study 1 - Static Stress</T></Row>
      <Row pad="pl-[55px]" w="h-[16px] w-[100px]" arrow="closed"><Slot><Material /></Slot><T>Study Materials</T></Row>
      <Row pad="pl-[55px]" w="h-[16px] w-[80px]" arrow="closed"><Slot><LoadCase /></Slot><T c="ml-[3px]">Load Case1</T></Row>
      <Row pad="pl-[55px]" w="h-[16px] w-[73px]"><Slot><Contact /></Slot><T>Contacts</T></Row>
      <Row pad="pl-[55px]" w="h-[16px] w-[59px]"><Slot><Mesh s={13} /></Slot><T>Mesh</T></Row>
      <Row pad="pl-[55px]" w="h-[16px] w-[66px]"><Slot><Res /></Slot><T>Results</T></Row>
      <Row pad="pl-[40px]" w="ml-px h-[14px] w-[157px] font-bold tracking-[0px] text-white" bg="bg-[#808080]" arrow="open"><span className="-ml-px flex items-center"><Slot><Ok /></Slot><Slot><Study /></Slot></span><T>Study 2 - Static Stress</T></Row>
      <Row pad="pl-[55px]" w="h-[16px] w-[121px]" arrow="closed"><Slot><Eye /></Slot><Slot><Material /></Slot><T>Study Materials</T></Row>
      <Row pad="pl-[55px]" w="h-[16px] w-[128px]" arrow="open">
        <Slot><Eye /></Slot>
        <span className="flex h-[14px] w-[87px] items-center bg-[#808080] font-bold tracking-[-0.050px] text-white"><span className="pl-[2px]"><LoadCase /></span><T c="ml-[8px]">Load Case1</T></span>
        <span className="ml-px"><Radio /></span>
      </Row>
      <Row pad="pl-[70px]" w="h-[16px] w-[84px]" arrow="open"><Slot><Eye /></Slot><Slot><Force two /></Slot><T>Loads</T></Row>
      <Row pad="pl-[87px]" w="h-[13px] w-[86px]" bg="bg-[#cbcbcb]"><Slot><Box /></Slot><Slot><Apple /></Slot><T c="ml-[5px] line-through">Gravity</T></Row>
      <Row pad="pl-[87px]" w="h-[16px] w-[103px]"><Slot><Box on /></Slot><Slot><Eye /></Slot><Slot><Force /></Slot><T c="ml-[6px]">Force1</T></Row>
      <Row pad="pl-[70px]" w="h-[16px] w-[104px]" arrow="closed"><Slot><Eye /></Slot><Slot><Fix /></Slot><T>Constraints</T></Row>
      <Row pad="pl-[55px]" w="h-[16px] w-[73px]"><Slot><Contact /></Slot><T>Contacts</T></Row>
      <Row pad="pl-[55px]" w="h-[16px] w-[80px]"><Slot><EyeOff /></Slot><Slot><Mesh s={13} /></Slot><T>Mesh</T></Row>
      <Row pad="pl-[55px]" w="h-[16px] w-[66px]"><Slot><Res /></Slot><T>Results</T></Row>
    </div>
  );
}

/* ---------- result legend ---------- */

const TICKS: [string, string][] = [
  ['0.09775 Max.', 'h-[37px]'], ['0.08', 'h-[41.500px]'], ['0.06', 'h-[41.500px]'], ['0.04', 'h-[41.500px]'], ['0.02', 'h-[41.500px]'], ['0 Min.', 'h-[1px]'],
];

function LegendPanel() {
  return (
    <div className="absolute left-[1056px] top-[450px] flex">
      <div className="mt-[3px] flex w-[93px] flex-col items-start gap-[7.500px] text-[9.600px] tracking-[-0.100px] text-[#222]">
        <div className="flex h-[18px] w-[86px] items-center bg-[#f0f0f0]">
          <span className="mr-[2px] flex h-[18px] w-[26px] shrink-0 items-center justify-center bg-[#06a0e0]">
            <svg width="14" height="14" viewBox="0 0 14 14" fill="none" stroke="#fff" strokeWidth="1.700"><path d="M1.500 3L5.500 6.500L12.500 1M1.500 8L5.500 12L12.500 6" /></svg>
          </span>
          <span className="whitespace-nowrap tracking-[-0.240px]">Load Case1</span>
          <span className="-ml-[4px] flex"><Caret /></span>
        </div>
        <div className="flex h-[18px] w-[77px] items-center justify-between bg-[#f0f0f0] pl-[2px] pr-[5px] tracking-[-0.250px]">Displacement<Caret /></div>
        <div className="flex h-[18px] w-[35px] items-center bg-[#f0f0f0] pl-[2px] tracking-[-0.250px]">Total<Caret /></div>
        <div className="flex h-[18px] w-[39px] items-center justify-between bg-[#f0f0f0] pl-[2px] pr-[2px] tracking-[-0.600px]">mm<Caret /></div>
        <div className="flex h-[18px] w-[53px] items-center gap-[14px] bg-[#f0f0f0] pl-[5px]">
          <svg width="14" height="14" viewBox="0 0 14 14" fill="none" stroke="#555">
            <circle cx="7" cy="7" r="4.300" strokeWidth="1.600" /><circle cx="7" cy="7" r="1.600" /><circle cx="7" cy="7" r="5.800" strokeWidth="1.600" strokeDasharray="2.200 2.355" />
          </svg>
          <svg width="12" height="12" viewBox="0 0 12 12"><path d="M11 1.500V10.500H1.500Z" fill="#8a8a8a" stroke="#444" strokeWidth="0.900" /></svg>
        </div>
      </div>
      <div className="mt-px h-[203px] w-[18px] bg-[linear-gradient(to_bottom,#ff0000_0%,#ffff00_22%,#ffff00_29%,#00ff00_50%,#00ffff_72%,#00ffff_80%,#0000ff_100%)] shadow-[0_1px_3px_rgba(0,0,0,0.750)]" />
      <div className="mt-px flex flex-col text-[10px] font-medium text-black">
        {TICKS.map(([t, h]) => (
          <div key={t} className={`flex items-start ${h}`}>
            <span className="flex h-full w-[8px] flex-col">
              <span className="h-px w-[8px] shrink-0 bg-[#777]" />
              {t !== '0 Min.' && <span className={t === '0.09775 Max.' ? 'mt-[15px] h-px w-[4px] shrink-0 bg-[#999]' : 'mt-[20px] h-px w-[4px] shrink-0 bg-[#999]'} />}
            </span>
            <span className="-mt-[7px] ml-[16px] whitespace-nowrap [-webkit-text-stroke:0.200px_#000]">{t}</span>
          </div>
        ))}
      </div>
    </div>
  );
}

export default function App() {
  return (
    <div className="flex h-[800px] w-[1280px] flex-col overflow-hidden bg-white font-['Liberation_Sans',Arial,sans-serif]">
      <header className="flex h-[68px] shrink-0 border-b border-[#d0d0d0] bg-[#f1f1f1]">
        <div className="ml-[3px] mt-[7px] flex h-[52px] w-[94px] items-center justify-center rounded-[4px] border-2 border-[#dedede] font-['Roboto',sans-serif] text-[10px] font-bold tracking-[-0.300px] text-[#333]">
          SIMULATION
          <BigCaret />
        </div>
        <div className="relative ml-[13px] w-[109px]">
          <Group w="-ml-[6px] w-[106px]" label="RESULT TOOLS" line={false} icons={<div className="ml-[6px] flex items-center pt-px"><Camera /><span className="ml-[8px]"><Legend /></span><span className="ml-[4px]"><Contour /></span></div>} />
          <div className="absolute left-0 top-0 flex h-[19px] w-[62px] items-center justify-center border-b-[3px] border-[#0696d7] bg-[#cde9f6] font-['Roboto',sans-serif] text-[10px] font-bold tracking-[-0.100px] text-[#1b95d3]">RESULTS</div>
          <span className="absolute right-0 top-[21px] h-[43px] w-px bg-[#d4d4d4]" />
        </div>
        <Group w="w-[71px]" label="COMPARE" icons={<span className="-ml-[2px]"><Compare /></span>} />
        <Group w="w-[118px]" label="DEFORMATION" icons={<div className="ml-[4px] flex items-center gap-[4px]"><span className="-ml-[3px]"><Def0 /></span><DefA /><span className="ml-px"><Def1 /></span></div>} />
        <Group w="w-[67px]" label="DISPLAY" icons={<Mesh />} />
        <Group w="w-[67px]" label="MANAGE" icons={<span className="-ml-[2px]"><Manage /></span>} />
        <Group w="w-[119px]" label="INSPECT" icons={<><InspectA /><InspectB /><span className="ml-[3px]"><InspectC /></span></>} />
        <Group w="w-[63px]" label="SELECT" line={false} icons={<span className="-ml-px"><Select /></span>} />
        <div className="ml-[2px] mt-[17px] h-[51px] w-[91px] bg-[#cde9f6]">
          <div className="-mt-[17px]"><Group w="w-[91px]" label="FINISH RESULTS" line={false} icons={<Check />} /></div>
        </div>
      </header>
      <main className="relative flex-1">
        <Scene />
        <section className="relative w-[252px]">
          <div className="flex h-[25px] w-[251px] items-center border border-l-0 border-[#d2d2d2] bg-[#f1f1f1] font-['Roboto',sans-serif] text-[10px] text-[#555]">
            <svg width="10" height="8" viewBox="0 0 10 8" className="ml-px"><path d="M4.500 1V7L0.500 4ZM9 1V7L5 4Z" fill="#333" /></svg>
            <span className="ml-[7px] mt-[2px] flex-1 tracking-[-0.300px]">BROWSER</span>
            <svg width="18" height="12" viewBox="0 0 18 12" fill="none"><circle cx="5" cy="6" r="4" fill="#333" /><path d="M3 6H7" stroke="#fff" strokeWidth="1.200" /><path d="M15.500 1.500V10.500M17 3V9" stroke="#999" /></svg>
          </div>
          <Tree />
        </section>
        <div className="absolute left-[482px] top-[389px] flex h-[16px] w-[103px] items-center justify-center rounded-full bg-[#b0b0b0] text-[10px] font-medium tracking-[0.100px] text-black [-webkit-text-stroke:0.200px_#000]">Max: 0.09775 mm</div>
        <div className="absolute left-[919px] top-[556px] flex h-[17px] w-[101px] items-center justify-center rounded-full bg-[#b0b0b0] text-[10px] tracking-[0.100px] text-black [-webkit-text-stroke:0.200px_#000]">Min: 0 mm</div>
        <LegendPanel />
      </main>
    </div>
  );
}
